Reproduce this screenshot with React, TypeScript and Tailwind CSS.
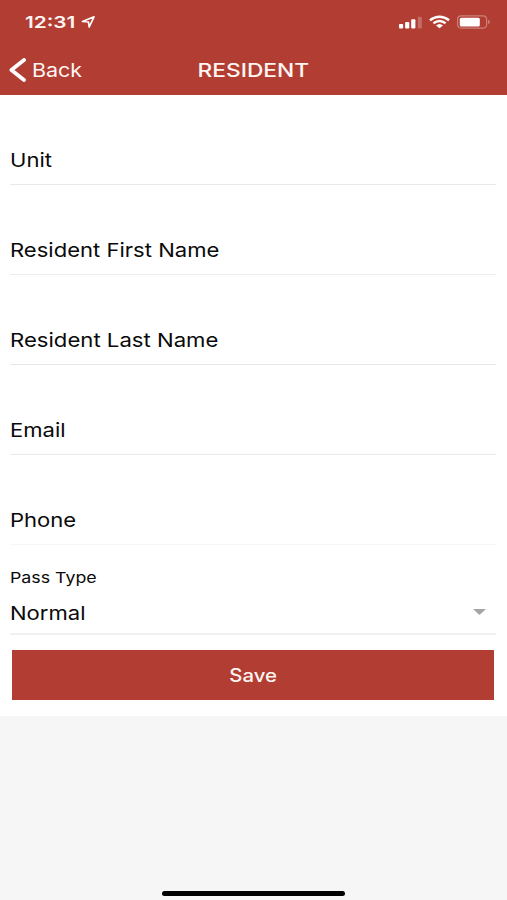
import React from "react";

const fields = [
  { label: "Unit", line: "border-[#e9e9e9]", text: "scale-x-[1.16]" },
  { label: "Resident First Name", line: "border-[#ececec]", text: "scale-x-[1.16]" },
  { label: "Resident Last Name", line: "border-[#e6e6e6]", text: "scale-x-[1.165]" },
  { label: "Email", line: "border-[#ebebeb]", text: "scale-x-[1.16]" },
  { label: "Phone", line: "border-[#f6f6f6]", text: "scale-x-[1.16]" },
];

const StatusBar = () => {
  return (
    <div className="flex h-[44px] items-center pl-[25px] pr-[16px]">
      <span className="w-[56px] whitespace-nowrap text-[16.5px] font-semibold leading-5">
        <span className="inline-block origin-left scale-x-[1.26]">12:31</span>
      </span>
      <svg className="block" width="15" height="14" viewBox="0 0 15 14" fill="none">
        <path d="M1.5 6.5 L13 1.8 L8.2 12 L7.5 7 Z" stroke="#fff" strokeWidth="1.7" strokeLinejoin="round" />
      </svg>
      <div className="ml-auto flex items-center">
        <svg className="block" width="23" height="14" viewBox="0 0 23 14" fill="#fff">
          <rect x="0" y="9" width="4.2" height="4.5" rx="1" />
          <rect x="6.1" y="7" width="4.2" height="6.5" rx="1" />
          <rect x="12.2" y="4.2" width="4.2" height="9.3" rx="1" />
          <rect x="18.8" y="1.8" width="4" height="11.7" rx="1" opacity=".25" />
        </svg>
        <svg className="ml-[7px] block" width="21" height="14" viewBox="0 0 21 14" fill="none" stroke="#fff" strokeWidth="2.4">
          <path d="M.9 5.2 Q10.5 -1.8 20.1 5.2" />
          <path d="M4.4 8.3 Q10.5 3.7 16.6 8.3" />
          <path d="M7 10.4 Q10.5 7.4 14 10.4 L10.5 13.2 Z" fill="#fff" stroke="none" />
        </svg>
        <svg className="ml-[7px] block" width="34" height="14" viewBox="0 0 34 14" fill="none">
          <rect x=".6" y=".9" width="29" height="12.2" rx="3.5" stroke="#fff" strokeOpacity=".35" strokeWidth="1.2" />
          <rect x="2.8" y="2.8" width="20" height="8.6" rx="1.5" fill="#fff" />
          <path d="M31.3 4.8 Q34.3 7 31.3 9.2 Z" fill="#fff" fillOpacity=".45" />
        </svg>
      </div>
    </div>
  );
};

const Field = ({ label, line, text }: any) => {
  return (
    <div className={`flex h-[90px] items-end border-b-[1.5px] pb-[11px] ${line}`}>
      <label className={`block origin-left whitespace-nowrap text-[19px] leading-6 ${text}`}>{label}</label>
    </div>
  );
};

export default function App() {
  return (
    <div className="flex h-[900px] w-[507px] flex-col overflow-hidden bg-[#f6f6f6] font-['Inter',sans-serif] text-[#0a0a0a]">
      <header className="h-[94.5px] bg-[#b23d33] text-[#fff5f2]">
        <StatusBar />
        <div className="grid h-[51px] grid-cols-[1fr_auto_1fr] items-center">
          <button className="flex items-center pl-[8px]">
            <svg className="block" width="18" height="24" viewBox="0 0 18 24" fill="none">
              <path d="M16 2 L3.4 12 L16 22" stroke="#fff" strokeWidth="3.8" strokeLinecap="round" strokeLinejoin="round" />
            </svg>
            <span className="ml-[6px] mt-[2px] block origin-left scale-x-[1.13] text-[19px] leading-6">Back</span>
          </button>
          <h1 className="scale-x-[1.23] text-[18.5px] font-medium leading-6">RESIDENT</h1>
        </div>
      </header>
      <main className="h-[621.5px] bg-white">
        <form className="pl-[10px] pr-[11px]">
          {fields.map((field) => (
            <Field key={field.label} {...field} />
          ))}
          <div className="flex h-[90px] flex-col border-b-2 border-[#f1f1f1] pt-[23px]">
            <label className="block origin-left scale-x-[1.185] text-[15px] leading-5">Pass Type</label>
            <div className="mt-[14px] flex items-center justify-between pr-[10px]">
              <span className="block origin-left scale-x-[1.16] text-[19px] leading-6">Normal</span>
              <svg className="mb-[3px] block" width="13" height="6" viewBox="0 0 13 6">
                <path d="M0 0 H13 L6.5 6 Z" fill="#a5a5a5" />
              </svg>
            </div>
          </div>
          <button
            type="button"
            className="ml-[2px] mt-[15px] flex h-[50px] w-[481.5px] items-center justify-center bg-[#b23d33] pt-[2px] text-[18px] font-medium text-[#fff5f2]"
          >
            <span className="block scale-x-[1.13]">Save</span>
          </button>
        </form>
      </main>
      <div className="mb-[4px] ml-[161.5px] mt-auto h-[5.5px] w-[183.5px] rounded-full bg-black" />
    </div>
  );
}
